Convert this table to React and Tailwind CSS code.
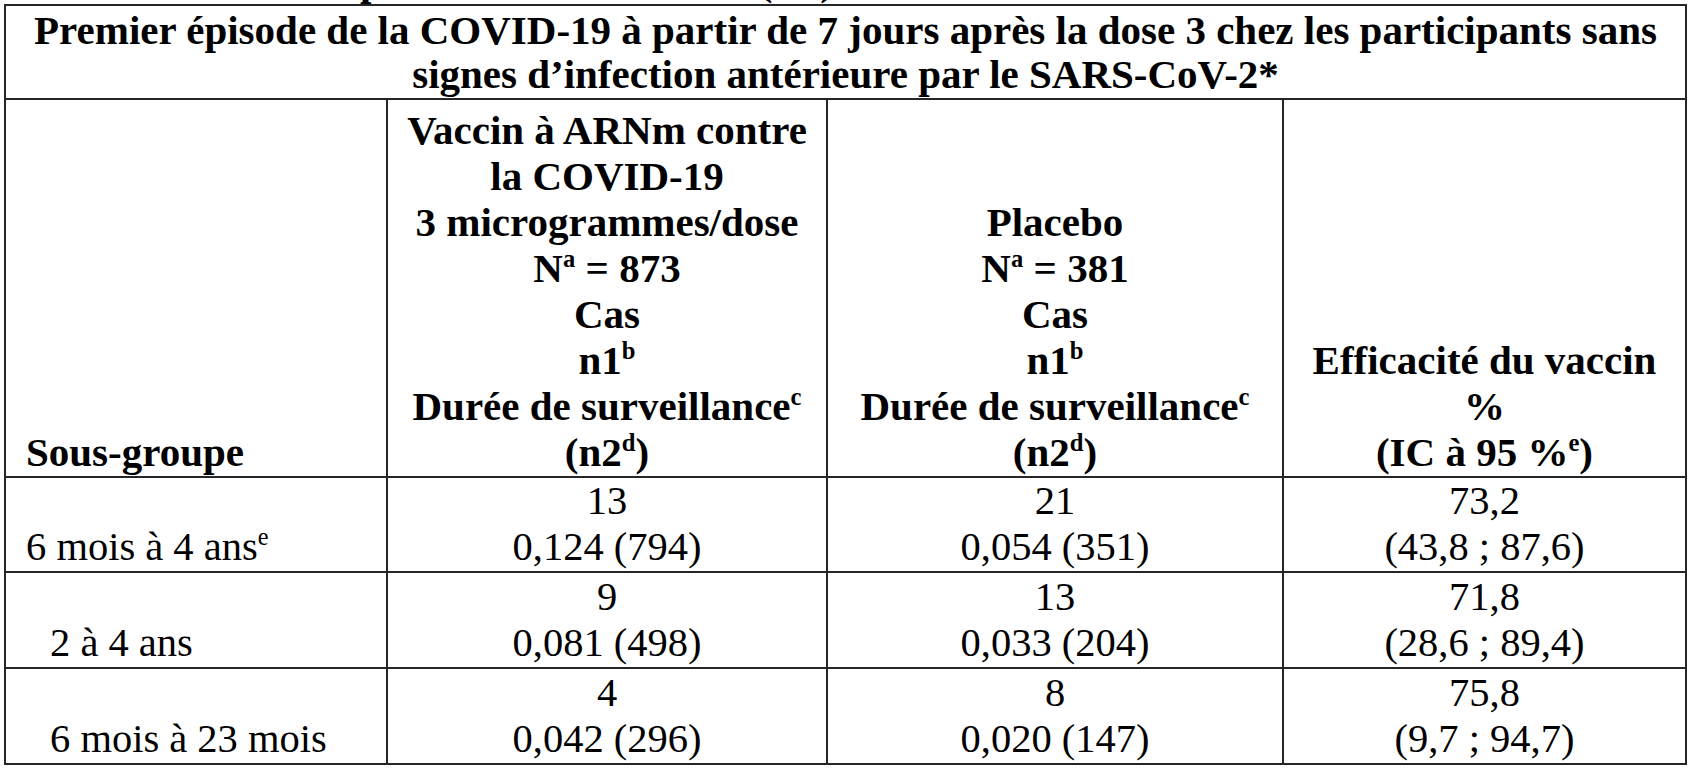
import React from "react";

const cell = "border-r-2 border-b-2 border-[#262626]";

function Sup({ children }) {
  return <span className="text-[0.6em] relative top-[-0.62em] leading-none">{children}</span>;
}

function DataCell({ top, bottom, h }) {
  return (
    <div className={`${cell} ${h} flex flex-col items-center justify-end pb-[1px] text-[40.5px] leading-[46px]`}>
      <div>{top}</div>
      <div>{bottom}</div>
    </div>
  );
}

export default function App() {
  const rows = [
    { label: <>6 mois à 4 ans<Sup>e</Sup></>, indent: "pl-[20px]", h: "h-[95px]", v: ["13", "0,124 (794)"], p: ["21", "0,054 (351)"], e: ["73,2", "(43,8 ; 87,6)"] },
    { label: <>2 à 4 ans</>, indent: "pl-[44px]", h: "h-[96px]", v: ["9", "0,081 (498)"], p: ["13", "0,033 (204)"], e: ["71,8", "(28,6 ; 89,4)"] },
    { label: <>6 mois à 23 mois</>, indent: "pl-[44px]", h: "h-[96px]", v: ["4", "0,042 (296)"], p: ["8", "0,020 (147)"], e: ["75,8", "(9,7 ; 94,7)"] },
  ];

  return (
    <div className="w-[1688px] h-[768px] overflow-hidden bg-white text-black font-['Liberation_Serif',serif]">
      <div className="h-[4px] overflow-hidden">
        <div className="flex mt-[-42px] text-[41px] leading-[46px] font-bold whitespace-nowrap">
          <span className="ml-[360px]">p</span>
          <span className="ml-[376px]">(fin)</span>
        </div>
      </div>
      <div className="ml-[4px] w-[1683px] border-l-2 border-t-2 border-[#262626] grid grid-cols-[382px_440px_456px_403px]">
        <div className={`${cell} col-span-4 h-[94px] flex flex-col items-center justify-center font-bold text-[41px] leading-[44px] whitespace-nowrap`}>
          <div>Premier épisode de la COVID-19 à partir de 7 jours après la dose 3 chez les participants sans</div>
          <div>signes d’infection antérieure par le SARS-CoV-2*</div>
        </div>

        <div className={`${cell} h-[378px] flex items-end pl-[20px] pb-[1px] font-bold text-[41px] leading-[46px]`}>
          Sous-groupe
        </div>
        <div className={`${cell} h-[378px] flex flex-col items-center justify-end pb-[1px] font-bold text-[41px] leading-[46px] text-center whitespace-nowrap`}>
          <div>Vaccin à ARNm contre</div>
          <div>la COVID-19</div>
          <div>3 microgrammes/dose</div>
          <div>N<Sup>a</Sup> = 873</div>
          <div>Cas</div>
          <div>n1<Sup>b</Sup></div>
          <div>Durée de surveillance<Sup>c</Sup></div>
          <div>(n2<Sup>d</Sup>)</div>
        </div>
        <div className={`${cell} h-[378px] flex flex-col items-center justify-end pb-[1px] font-bold text-[41px] leading-[46px] text-center whitespace-nowrap`}>
          <div>Placebo</div>
          <div>N<Sup>a</Sup> = 381</div>
          <div>Cas</div>
          <div>n1<Sup>b</Sup></div>
          <div>Durée de surveillance<Sup>c</Sup></div>
          <div>(n2<Sup>d</Sup>)</div>
        </div>
        <div className={`${cell} h-[378px] flex flex-col items-center justify-end pb-[1px] font-bold text-[41px] leading-[46px] text-center whitespace-nowrap`}>
          <div>Efficacité du vaccin</div>
          <div>%</div>
          <div>(IC à 95 %<Sup>e</Sup>)</div>
        </div>

        {rows.map((r, i) => (
          <React.Fragment key={i}>
            <div className={`${cell} ${r.h} flex items-end ${r.indent} pb-[1px] text-[40.5px] leading-[46px] whitespace-nowrap`}>
              <div>{r.label}</div>
            </div>
            <DataCell h={r.h} top={r.v[0]} bottom={r.v[1]} />
            <DataCell h={r.h} top={r.p[0]} bottom={r.p[1]} />
            <DataCell h={r.h} top={r.e[0]} bottom={r.e[1]} />
          </React.Fragment>
        ))}
      </div>
    </div>
  );
}
